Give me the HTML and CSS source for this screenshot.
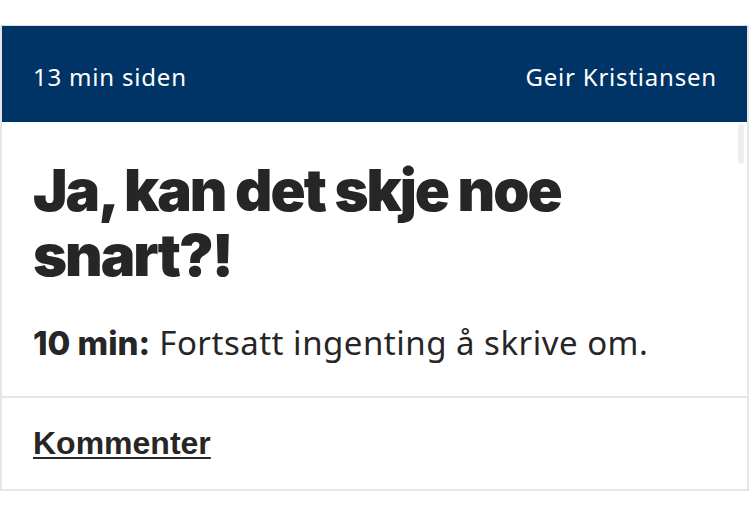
FILE: index.html
```html
<!DOCTYPE html>
<html lang="no">
<head>
<meta charset="utf-8">
<title>Live</title>
<link rel="stylesheet" href="styles.css">
</head>
<body>
<article class="card">
  <header class="meta">
    <span class="time">13 min siden</span>
    <span class="author">Geir Kristiansen</span>
  </header>
  <div class="content">
    <h1 class="title">Ja, kan det skje noe snart?!</h1>
    <p class="text"><strong>10 min:</strong> Fortsatt ingenting å skrive om.</p>
    <div class="scroll-thumb"></div>
  </div>
  <footer class="actions">
    <a class="comment" href="#">Kommenter</a>
  </footer>
</article>
</body>
</html>
```

FILE: styles.css
```css
html, body {
  margin: 0;
  padding: 0;
  background: #ffffff;
}
body {
  padding-top: 25px;
}
.card {
  width: 745px;
  border: 2px solid #e6e6e6;
  border-top: 1px solid #cfdcec;
  background: #fff;
}
.meta {
  display: flex;
  justify-content: space-between;
  align-items: center;
  height: 96px;
  padding: 4px 30px 0 31px;
  box-sizing: border-box;
  background: #003466;
  color: #ffffff;
  font-family: "Noto Sans", sans-serif;
  font-size: 24px;
  letter-spacing: 0.8px;
}
.content {
  position: relative;
  padding: 36px 31px 33px;
  border-bottom: 2px solid #e6e6e6;
}
.title {
  margin: 0;
  font-family: Inter, sans-serif;
  font-weight: 900;
  font-size: 58px;
  line-height: 65px;
  letter-spacing: -2px;
  color: #262626;
  width: 560px;
}
.text {
  margin: 35px 0 0;
  font-family: "Noto Sans", sans-serif;
  font-size: 33px;
  line-height: 40px;
  letter-spacing: 0.5px;
  color: #262626;
}
.text strong {
  font-family: Inter, sans-serif;
  font-weight: 800;
  letter-spacing: 0;
}
.scroll-thumb {
  position: absolute;
  top: 2px;
  right: 3px;
  width: 6px;
  height: 40px;
  border-radius: 3px;
  background: #eeeeee;
}
.actions {
  height: 91px;
  display: flex;
  align-items: center;
  padding: 0 31px;
}
.comment {
  font-family: "Liberation Sans", Arial, sans-serif;
  font-weight: 700;
  font-size: 32px;
  color: #262626;
  text-decoration: underline;
  text-underline-offset: 3px;
  text-decoration-thickness: 2px;
}
```
